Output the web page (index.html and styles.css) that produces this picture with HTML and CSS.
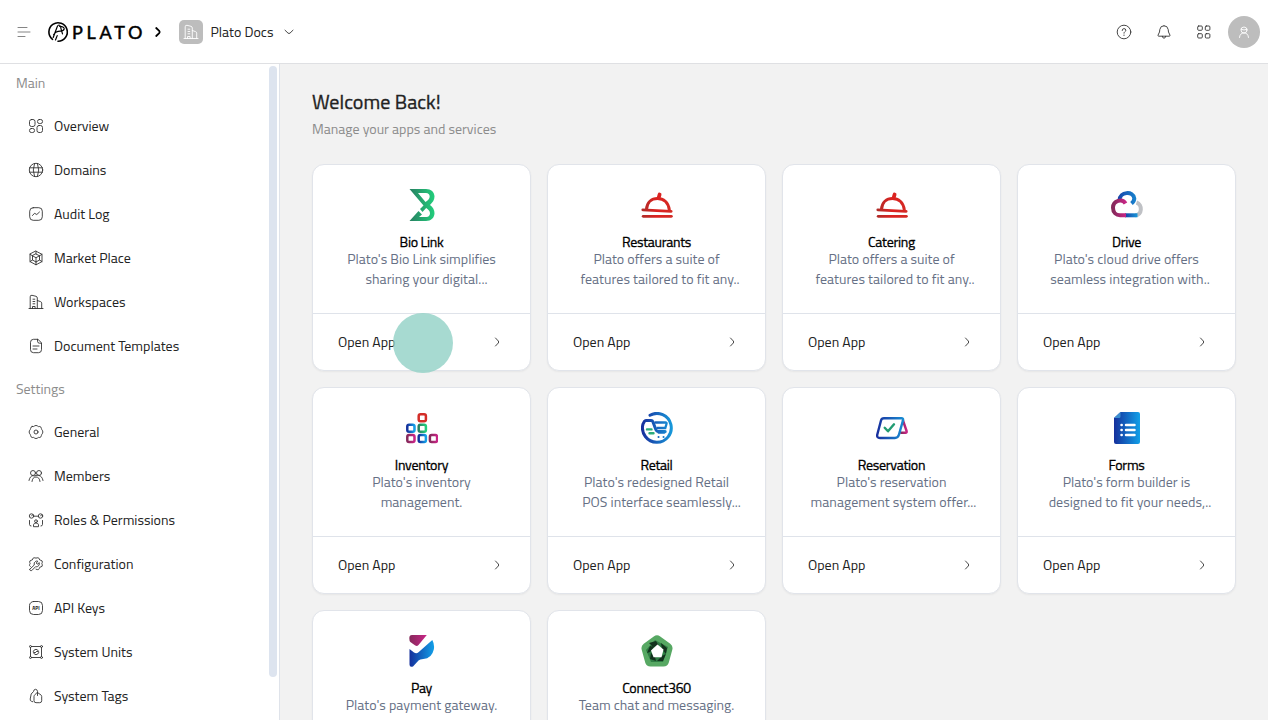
FILE: index.html
```html
<!DOCTYPE html>
<html lang="en">
  <head>
    <meta charset="UTF-8" />
    <meta name="viewport" content="width=device-width, initial-scale=1.0" />
    <title>Plato Docs</title>
    <link rel="stylesheet" href="styles.css" />
  </head>

  <body>
    <!-- Shared icons -->
    <svg class="defs" width="0" height="0">
      <defs>
        <linearGradient id="blue" x1="0" y1="0" x2="1" y2="0">
          <stop offset="0" stop-color="#15309c" />
          <stop offset="1" stop-color="#12a0e8" />
        </linearGradient>
        <linearGradient id="blueLine" gradientUnits="userSpaceOnUse" x1="0" y1="0" x2="32" y2="0">
          <stop offset="0" stop-color="#182c9c" />
          <stop offset="1" stop-color="#189cdc" />
        </linearGradient>
        <linearGradient id="blueBase" gradientUnits="userSpaceOnUse" x1="13" y1="0" x2="27" y2="0">
          <stop offset="0" stop-color="#173a9f" />
          <stop offset="1" stop-color="#189cdc" />
        </linearGradient>
        <linearGradient id="green" x1="0" y1="0" x2="1" y2="0">
          <stop offset="0" stop-color="#277f61" />
          <stop offset="1" stop-color="#22ce7c" />
        </linearGradient>
        <linearGradient id="red" gradientUnits="userSpaceOnUse" x1="0" y1="0" x2="32" y2="0">
          <stop offset="0" stop-color="#ad2d29" />
          <stop offset="0.5" stop-color="#dc2220" />
          <stop offset="1" stop-color="#d22b25" />
        </linearGradient>
        <linearGradient id="pink" x1="0" y1="0" x2="1" y2="0">
          <stop offset="0" stop-color="#85295a" />
          <stop offset="1" stop-color="#c92587" />
        </linearGradient>
      </defs>
      <symbol id="chevron" viewBox="0 0 16 16">
        <path d="M6.500 4 9.300 7q.8 1 0 2L6.500 12" />
      </symbol>
      <symbol id="building" viewBox="0 0 16 16">
        <path d="M1 14.500h14M2.200 14.500V2.800Q2.200 1 4 1.300l4 1q1.300.4 1.300 1.700v10.500M9.300 6.500l3.400 1.200q1 .4 1 1.400v5.400M5 5.200h1.800M5 7.500h1.800M5 9.800h1.800M4.500 14.500v-2h2.600v2" />
      </symbol>
      <symbol id="cloche" viewBox="0 0 32 32">
        <g fill="none" stroke="url(#red)" stroke-width="3" stroke-linecap="round">
          <path d="M5.500 20.300C6 13.500 10.500 9.500 16.500 9.500S27.300 13.500 28.300 20.800" />
          <path d="M1.800 20.800 30.200 22.300" stroke-width="2.800" />
          <path d="M2.200 27.300h28.200" stroke-width="2.800" />
          <path d="m17.600 9 1-3.500" stroke-width="3.800" />
        </g>
      </symbol>
    </svg>

    <header class="topbar">
      <svg class="icon menu" viewBox="0 0 16 16"><path d="M2 3.500h9M2 8h12M2 12.500h7" /></svg>
      <svg class="logo" viewBox="0 0 96 24">
        <g fill="none" stroke="#000" stroke-width="1.600" stroke-linecap="round">
          <path d="M5.500 19.300A9.200 9.200 0 1 1 11 21.200" />
          <path d="M6.200 17.500 10.200 6.800q.8-1.800 1.800-1.800t1.400 1.600l2.100 7.200M6.600 14.800q2.200-3.600 6.600-3.600 3.500 0 4-2.300.1-2.300-4.600-2.600M8.500 20l1.700-4.400" stroke-width="1.200" />
        </g>
        <text class="wordmark" x="25" y="18.500" textLength="70.500">PLATO</text>
      </svg>
      <svg class="icon crumb" viewBox="0 0 16 16"><path d="m6.200 4 3 2.800q1 1.200 0 2.400l-3 2.800" /></svg>
      <span class="workspace-badge"><svg class="icon"><use href="#building" /></svg></span>
      <span class="workspace-name">Plato Docs</span>
      <svg class="icon caret" viewBox="0 0 16 16"><path d="M4 6.200 7 9.100q1 .8 2 0l3-2.900" /></svg>

      <div class="actions">
        <svg class="icon" viewBox="0 0 16 16"><circle cx="8" cy="8" r="6.800" /><path d="M6.200 6.500q0-1.900 1.800-1.900t1.800 1.700q0 .9-1 1.500-.8.500-.8 1.400M8 11v.5" /></svg>
        <svg class="icon" viewBox="0 0 16 16"><path d="M8 1.700q3.700 0 4.200 3.800l.3 2.500 1.500 3.200q.2.900-.7 1H2.700q-.9-.1-.7-1L3.500 8l.3-2.500Q4.300 1.700 8 1.700M6.300 12.300q.2 1.900 1.700 1.900t1.700-1.900" /></svg>
        <svg class="icon" viewBox="0 0 16 16"><rect x="1.700" y="2" width="4.600" height="4.300" rx="1" /><rect x="9.300" y="2" width="4.600" height="4.300" rx="1" /><rect x="1.700" y="9.700" width="4.600" height="4.300" rx="1" /><rect x="9.300" y="9.700" width="4.600" height="4.300" rx="1" /></svg>
        <span class="avatar"><svg class="icon" viewBox="0 0 16 16"><circle cx="8" cy="6" r="3" /><path d="M5 5.300q3 1.500 6 0M3.500 13.500q.3-4.500 4.500-4.500t4.500 4.500" /></svg></span>
      </div>
    </header>

    <div class="layout">
      <aside class="sidebar">
        <nav class="nav">
          <h2 class="nav-title">Main</h2>
          <a class="nav-item"><svg class="icon" viewBox="0 0 16 16"><rect x="1.500" y="1.500" width="5.500" height="7" rx="2" /><rect x="9.500" y="1.500" width="5" height="4" rx="1.800" /><rect x="1.500" y="10.500" width="5" height="4" rx="1.800" /><rect x="9" y="7.500" width="5.500" height="7" rx="2" /></svg><span>Overview</span></a>
          <a class="nav-item"><svg class="icon" viewBox="0 0 16 16"><circle cx="8" cy="8" r="6.700" /><path d="M1.500 5.800h13M1.500 10.200h13M6.500 1.500q-2.500 6.500 0 13M9.500 1.500q2.500 6.500 0 13" /></svg><span>Domains</span></a>
          <a class="nav-item"><svg class="icon" viewBox="0 0 16 16"><rect x="1.700" y="1.700" width="12.600" height="12.600" rx="3.500" /><path d="m4.500 9.500 2-2.200 2.300 1.200 2.700-2.500" /></svg><span>Audit Log</span></a>
          <a class="nav-item"><svg class="icon" viewBox="0 0 16 16"><path d="m8 1.200 6 3.100v7.300l-6 3.200-6-3.200V4.300zM8 4l3.500 1.800v4.200L8 12 4.500 10V5.800zM4.500 5.800 8 7.700l3.500-1.900M8 7.700V12M2 4.300l2.500 1.500M14 4.300l-2.500 1.500M4.500 10 2 11.600M11.500 10l2.500 1.600M8 1.200V4M8 12v2.800" /></svg><span>Market Place</span></a>
          <a class="nav-item"><svg class="icon"><use href="#building" /></svg><span>Workspaces</span></a>
          <a class="nav-item"><svg class="icon" viewBox="0 0 16 16"><path d="M9.500 1.300H5.500q-3 0-3 3v7.400q0 3 3 3h5q3 0 3-3V5.200zM9.500 1.300v1.900q0 2 2 2h2M5 8h6M5 11h4" /></svg><span>Document Templates</span></a>

          <h2 class="nav-title settings">Settings</h2>
          <a class="nav-item"><svg class="icon" viewBox="0 0 16 16"><path d="M4.200 2.500q1.500.5 2.400-.6 1.400-1 2.800 0 .9 1.100 2.400.6 1.500.3 1.600 2 0 .9.9 1.700 1.200 1.800 0 3.600-.9.800-.9 1.700-.1 1.700-1.600 2-1.500-.5-2.400.6-1.400 1-2.800 0-.9-1.100-2.400-.6-1.500-.3-1.600-2 0-.9-.9-1.700-1.200-1.800 0-3.600.9-.8.900-1.700.1-1.700 1.600-2z" /><circle cx="8" cy="8" r="2" /></svg><span>General</span></a>
          <a class="nav-item"><svg class="icon" viewBox="0 0 16 16"><circle cx="5" cy="5" r="2.500" /><circle cx="11" cy="5" r="2.500" /><path d="M1 12.500Q1.800 8 5 7.500M4 13.500Q4.500 9 8 9t4 4.500M15 12.500Q14.200 8 11 7.500M6 8l4-1" /></svg><span>Members</span></a>
          <a class="nav-item"><svg class="icon" viewBox="0 0 16 16"><circle cx="3.500" cy="4" r="2.200" /><circle cx="12.500" cy="4" r="2.200" /><path d="M5.700 4.200h4.600M1.500 8.500v4q0 1.500 1.500 1.500M14.500 8.500v4Q14.500 14 13 14M3.500 4l1.500-1.500M12.500 4 14 2.500" /><circle cx="8" cy="9.200" r="1.400" /><path d="M5.500 14.300v-1.500q.3-1.800 2.500-1.800t2.500 1.800v1.500z" /></svg><span>Roles &amp; Permissions</span></a>
          <a class="nav-item"><svg class="icon" viewBox="0 0 16 16"><path d="M2.300 10.500q-1.500-1.200-.6-2.100.9-.8 0-2-.4-1.900 1.500-2.100 1.300 0 1.500-1.300.5-1.700 2.100-1.200 1.200.7 2.400 0 1.600-.5 2.100 1.200.2 1.300 1.500 1.300 1.900.2 1.500 2.100-.9 1.200 0 2.400.4 1.900-1.500 2.100-1.300 0-1.500 1.500-.5 1.700-2.100 1.200l-1.200-.4M1.700 13.300l4.500-4.200q-.6-2.700 1.500-3.800 1-.5 2.100-.1L8.300 7l1 1.200 2-1.500q.5 3-1.800 3.900-.9.300-1.800 0l-4 4q-.9.300-1.500-.2t-.5-1.100" /></svg><span>Configuration</span></a>
          <a class="nav-item"><svg class="icon" viewBox="0 0 16 16"><rect x="1.500" y="1.500" width="13" height="13" rx="4" /><text class="api" x="8" y="10.100">API</text></svg><span>API Keys</span></a>
          <a class="nav-item"><svg class="icon" viewBox="0 0 16 16"><path d="M3.500 2.500h9M3.500 13.500h9M2.500 3.500v9M13.500 3.500v9M5.200 7.500Q6 5.300 8 5.300q1.700 0 2.600 2.200H8.500M10.800 8.500Q10 10.700 8 10.700q-1.700 0-2.600-2.200h2.100" /><circle cx="2.500" cy="2.500" r="1" /><circle cx="13.500" cy="2.500" r="1" /><circle cx="2.500" cy="13.500" r="1" /><circle cx="13.500" cy="13.500" r="1" /></svg><span>System Units</span></a>
          <a class="nav-item"><svg class="icon" viewBox="0 0 16 16"><path d="M9.500 4.500 13 7q.7.500.7 1.500v4.200q0 2-2 2H8q-2 0-2-2V8.500Q6 7.500 6.700 7zM9.500 7.500V3.300q-.3-2-2-2t-2 2.200L3.200 6 2.200 11q-.3 2 1.500 2.400l1 .3" /></svg><span>System Tags</span></a>
        </nav>
        <div class="scrollbar"></div>
      </aside>

      <main class="content">
        <h1 class="page-title">Welcome Back!</h1>
        <p class="page-subtitle">Manage your apps and services</p>

        <div class="cards">
          <section class="card">
            <div class="card-body">
              <svg class="app-icon" viewBox="0 0 32 32"><path fill="url(#green)" fill-rule="evenodd" d="M3.500 0H20c5 0 8.500 3 8.500 7.500 0 3.500-2 6-4.500 8.500 3 2.300 4.500 5 4.500 8.300 0 4.500-3.500 7.700-8.500 7.700H3.500l9-10 3.500 3.500-3 2.500h7.500c2 0 3.500-1.500 3.500-3.700 0-2.300-1.500-3.500-3.800-5.300l-3.700 4-2.500-3 3.500-3.500zM12 4l7.500 9c2.500-1.800 4.200-3.300 4.200-5.500 0-2-1.500-3.500-3.700-3.500z" /></svg>
              <h3 class="app-name">Bio Link</h3>
              <p class="app-text">Plato's Bio Link simplifies<br /><span class="clamp wide">sharing your digital...</span></p>
            </div>
            <a class="card-link"><span>Open App</span><svg class="icon"><use href="#chevron" /></svg></a>
            <span class="pointer"></span>
          </section>

          <section class="card">
            <div class="card-body">
              <svg class="app-icon"><use href="#cloche" /></svg>
              <h3 class="app-name">Restaurants</h3>
              <p class="app-text">Plato offers a suite of<br /><span class="clamp">features tailored to fit any..</span></p>
            </div>
            <a class="card-link"><span>Open App</span><svg class="icon"><use href="#chevron" /></svg></a>
          </section>

          <section class="card">
            <div class="card-body">
              <svg class="app-icon"><use href="#cloche" /></svg>
              <h3 class="app-name">Catering</h3>
              <p class="app-text">Plato offers a suite of<br /><span class="clamp">features tailored to fit any..</span></p>
            </div>
            <a class="card-link"><span>Open App</span><svg class="icon"><use href="#chevron" /></svg></a>
          </section>

          <section class="card">
            <div class="card-body">
              <svg class="app-icon" viewBox="0 0 32 32" fill="none" stroke-width="4">
                <path stroke="#bfc1c5" d="M25.500 13.500c6 2 6 12.800-1.500 12.800" />
                <path stroke="url(#blueLine)" d="M8.500 11.500C8.500 2.500 22.500 1.500 23.300 9.500c0 2-1 3.500-2.800 5" />
                <path stroke="url(#blueBase)" d="M14 26.300h12.500" />
                <path stroke="url(#pink)" d="M14.500 14.500C11.500 9 2 11.500 2 18.700c0 5 3.500 7.600 7 7.600h6" />
              </svg>
              <h3 class="app-name">Drive</h3>
              <p class="app-text">Plato's cloud drive offers<br /><span class="clamp">seamless integration with..</span></p>
            </div>
            <a class="card-link"><span>Open App</span><svg class="icon"><use href="#chevron" /></svg></a>
          </section>

          <section class="card">
            <div class="card-body">
              <svg class="app-icon" viewBox="0 0 32 32" fill="none" stroke-width="2.500">
                <rect x="12.700" y="2.300" width="7.200" height="7" rx="1.800" stroke="#d32d28" />
                <rect x="1.300" y="12.700" width="7.200" height="7" rx="1.800" stroke="url(#blue)" />
                <rect x="12.700" y="12.700" width="7.200" height="7" rx="1.800" stroke="url(#green)" />
                <rect x="1.300" y="23.100" width="7.200" height="7" rx="1.800" stroke="url(#pink)" />
                <rect x="12.700" y="23.100" width="7.200" height="7" rx="1.800" stroke="url(#blue)" />
                <rect x="23.900" y="23.100" width="7.200" height="7" rx="1.800" stroke="url(#pink)" />
              </svg>
              <h3 class="app-name">Inventory</h3>
              <p class="app-text">Plato's inventory<br />management.</p>
            </div>
            <a class="card-link"><span>Open App</span><svg class="icon"><use href="#chevron" /></svg></a>
          </section>

          <section class="card">
            <div class="card-body">
              <svg class="app-icon" viewBox="0 0 32 32" fill="none" stroke="url(#blueLine)" stroke-width="3" stroke-linecap="round">
                <path d="M9 3.200A14.400 14.400 0 1 1 2 12l1.500-2.700q.5-.8 1.500-.8h5.200q1.200 0 1.700 1.300l3 8q.7 1.700 2.300 1.700h7" />
                <path d="M14.500 10.500h10q1.500 0 1 1.500l-1.200 4H16.500M17.500 20.500h6" stroke-width="2.300" />
                <path stroke="#2cab7b" stroke-width="2.400" d="M6 17.400h4.500M8.500 21.300h4" />
                <path stroke-width="2" d="M17.500 25h.1M22.500 25h.1" />
              </svg>
              <h3 class="app-name">Retail</h3>
              <p class="app-text">Plato's redesigned Retail<br /><span class="clamp wide">POS interface seamlessly...</span></p>
            </div>
            <a class="card-link"><span>Open App</span><svg class="icon"><use href="#chevron" /></svg></a>
          </section>

          <section class="card">
            <div class="card-body">
              <svg class="app-icon" viewBox="0 0 32 32" fill="none" stroke-width="2.400" stroke-linecap="round" stroke-linejoin="round">
                <path stroke="url(#pink)" d="m27 8.500 3.600 10.500q.4 1.700-1 1.700h-4.500" />
                <path stroke="url(#blueLine)" d="M8 6.300h17.500q2 0 1.500 2l-4 14.200q-1 3.500-4 3.500H4q-3.500 0-2.700-3.500L5 8.500q.6-2.200 3-2.200z" />
                <path stroke="#229c72" d="m8.700 15.800 3.300 3.500 6-7" />
              </svg>
              <h3 class="app-name">Reservation</h3>
              <p class="app-text">Plato's reservation<br /><span class="clamp narrow">management system offer...</span></p>
            </div>
            <a class="card-link"><span>Open App</span><svg class="icon"><use href="#chevron" /></svg></a>
          </section>

          <section class="card">
            <div class="card-body">
              <svg class="app-icon" viewBox="0 0 32 32">
                <path fill="url(#blue)" d="M9.500 0H27q2 0 2 2v28q0 2-2 2H5q-2 0-2-2V6z" />
                <path fill="#3d8fd0" d="M9.500 0v4.500Q9.500 6 8 6H3z" />
                <path stroke="#fff" stroke-width="2.500" stroke-linecap="round" d="M15 13h8.500M15 18h8.500M15 23h8.500M10.500 13h.2M10.500 18h.2M10.500 23h.2" />
              </svg>
              <h3 class="app-name">Forms</h3>
              <p class="app-text">Plato's form builder is<br /><span class="clamp">designed to fit your needs,..</span></p>
            </div>
            <a class="card-link"><span>Open App</span><svg class="icon"><use href="#chevron" /></svg></a>
          </section>

          <section class="card">
            <div class="card-body">
              <svg class="app-icon" viewBox="0 0 32 32">
                <path fill="url(#pink)" d="M6 0h14.800L12.500 10q-1.500 1.500-3.200.5L4.300 7Q3.300 6 3.300 3 3.300 0 6 0z" />
                <path fill="url(#blue)" d="M3.500 14 8 17.500q2.500 1.500 4.500-.3L26.300 5q2.500 4.500 1.500 9.500-2 9-10.500 9.500-3.500.2-4.800 1.500l-5.500 6q-3.500 1.200-3.500-2z" />
              </svg>
              <h3 class="app-name">Pay</h3>
              <p class="app-text">Plato's payment gateway.</p>
            </div>
            <a class="card-link"><span>Open App</span><svg class="icon"><use href="#chevron" /></svg></a>
          </section>

          <section class="card">
            <div class="card-body">
              <svg class="app-icon" viewBox="0 0 32 32" stroke-linejoin="round">
                <path fill="#57a863" stroke="#57a863" stroke-width="11" d="m16 6 10 7.300-3.500 12.700H9.500L6 13.300z" />
                <path fill="#2f7d44" d="m14 5 13 7-5 15H10L5 15z" />
                <path fill="#12321d" d="m8 8 7-2 3 5-6 1zM20 8l6 5-1 6-4-5zM25 19l-3 7h-6l5-5zM15 26l-6-2 1-6 4 4zM6 18l3-7 4 1-4 5z" />
                <path fill="#fff" d="m16.500 9.500 6 5-2 7.800h-8L10 15.500z" />
              </svg>
              <h3 class="app-name">Connect360</h3>
              <p class="app-text">Team chat and messaging.</p>
            </div>
            <a class="card-link"><span>Open App</span><svg class="icon"><use href="#chevron" /></svg></a>
          </section>
        </div>
      </main>
    </div>
  </body>
</html>
```
FILE: styles.css
```css
* {
  box-sizing: border-box;
}

body {
  margin: 0;
  height: 100vh;
  overflow: hidden;
  font-family: "Titillium Web", Roboto, sans-serif;
  font-size: 14px;
  color: #222;
  background-color: #f2f2f2;
}

h1,
h2,
h3,
p {
  margin: 0;
  font-weight: 400;
}

.defs {
  display: block;
}

.icon {
  width: 16px;
  height: 16px;
  flex: none;
  fill: none;
  stroke: #333;
  stroke-width: 0.9;
  stroke-linecap: round;
  stroke-linejoin: round;
}

/* Top bar */
.topbar {
  display: flex;
  align-items: center;
  height: 64px;
  padding: 0 8px 0 16px;
  background-color: #fff;
  border-bottom: 1px solid #dfe0e3;
}

.menu {
  stroke: #777;
}

.logo {
  width: 96px;
  height: 24px;
  margin-left: 15px;
}

.wordmark {
  font-family: Lato, sans-serif;
  font-size: 18px;
  font-weight: 400;
  stroke: #000;
  stroke-width: 0.5;
}

.crumb {
  margin-left: 7px;
  stroke: #000;
  stroke-width: 1.8;
}

.workspace-badge {
  display: flex;
  align-items: center;
  justify-content: center;
  width: 24px;
  height: 24px;
  margin-left: 13px;
  border-radius: 5px;
  background-color: #bdbdbd;
}

.workspace-badge .icon,
.avatar .icon {
  stroke: #fff;
}

.workspace-name {
  margin: 0 7.5px;
}

.actions {
  display: flex;
  align-items: center;
  gap: 24px;
  margin-left: auto;
}

.avatar {
  display: flex;
  align-items: center;
  justify-content: center;
  width: 32px;
  height: 32px;
  margin-left: -8px;
  border-radius: 50%;
  background-color: #bdbdbd;
}

.layout {
  display: flex;
  height: calc(100vh - 64px);
  overflow: hidden;
}

/* Sidebar */
.sidebar {
  display: flex;
  flex: none;
  width: 280px;
  overflow: hidden;
  background-color: #fff;
  border-right: 1px solid #dfe3ea;
}

.nav {
  flex: 1;
}

.nav-title {
  height: 38px;
  margin-bottom: 2px;
  padding-left: 16px;
  font-size: 14px;
  line-height: 38px;
  color: #8c8c8c;
}

.nav-title.settings {
  margin-top: 2px;
}

.nav-item {
  display: flex;
  align-items: center;
  gap: 10px;
  height: 44px;
  padding-left: 28px;
  line-height: 20px;
}

.api {
  font-size: 5px;
  font-weight: 700;
  fill: #222;
  stroke: none;
  text-anchor: middle;
}

.scrollbar {
  width: 8px;
  height: 611px;
  margin: 2px 2px 0 0;
  border-radius: 4px;
  background-color: #dde4ef;
}

/* Content */
.content {
  flex: 1;
  padding: 24px 32px 0;
}

.page-title {
  font-size: 20px;
  line-height: 28px;
  letter-spacing: 0.05px;
  -webkit-text-stroke: 0.35px #222;
}

.page-subtitle {
  margin-top: 3px;
  line-height: 20px;
  color: #8c8c8c;
}

.cards {
  display: grid;
  grid-template-columns: repeat(4, 1fr);
  grid-auto-rows: 207px;
  gap: 16px;
  margin-top: 25px;
}

.card {
  position: relative;
  display: flex;
  flex-direction: column;
  border: 1px solid #e1e4ea;
  border-radius: 12px;
  background-color: #fff;
  box-shadow: 0 1px 2px rgba(0, 0, 0, 0.05);
}

.card-body {
  flex: 1;
  padding-top: 24px;
  text-align: center;
}

.app-icon {
  display: block;
  width: 32px;
  height: 32px;
  margin: 0 auto 14px;
}

.app-name {
  font-size: 14px;
  line-height: 14px;
  letter-spacing: -0.28px;
  color: #000;
  -webkit-text-stroke: 0.3px #000;
}

.app-text {
  line-height: 20px;
  white-space: nowrap;
  color: #667085;
}

/* truncated lines sit slightly right of centre */
.clamp {
  padding-left: 7px;
  letter-spacing: 0.04px;
}

.clamp.wide {
  padding-left: 10px;
}

.clamp.narrow {
  padding-left: 4px;
}

.card-link {
  display: flex;
  align-items: center;
  justify-content: space-between;
  height: 57px;
  padding: 0 25px;
  line-height: 20px;
  border-top: 1px solid #dfe3ea;
}

.pointer {
  position: absolute;
  left: 80px;
  top: 148px;
  width: 60px;
  height: 60px;
  border-radius: 50%;
  background-color: rgba(145, 209, 197, 0.8);
}
```
